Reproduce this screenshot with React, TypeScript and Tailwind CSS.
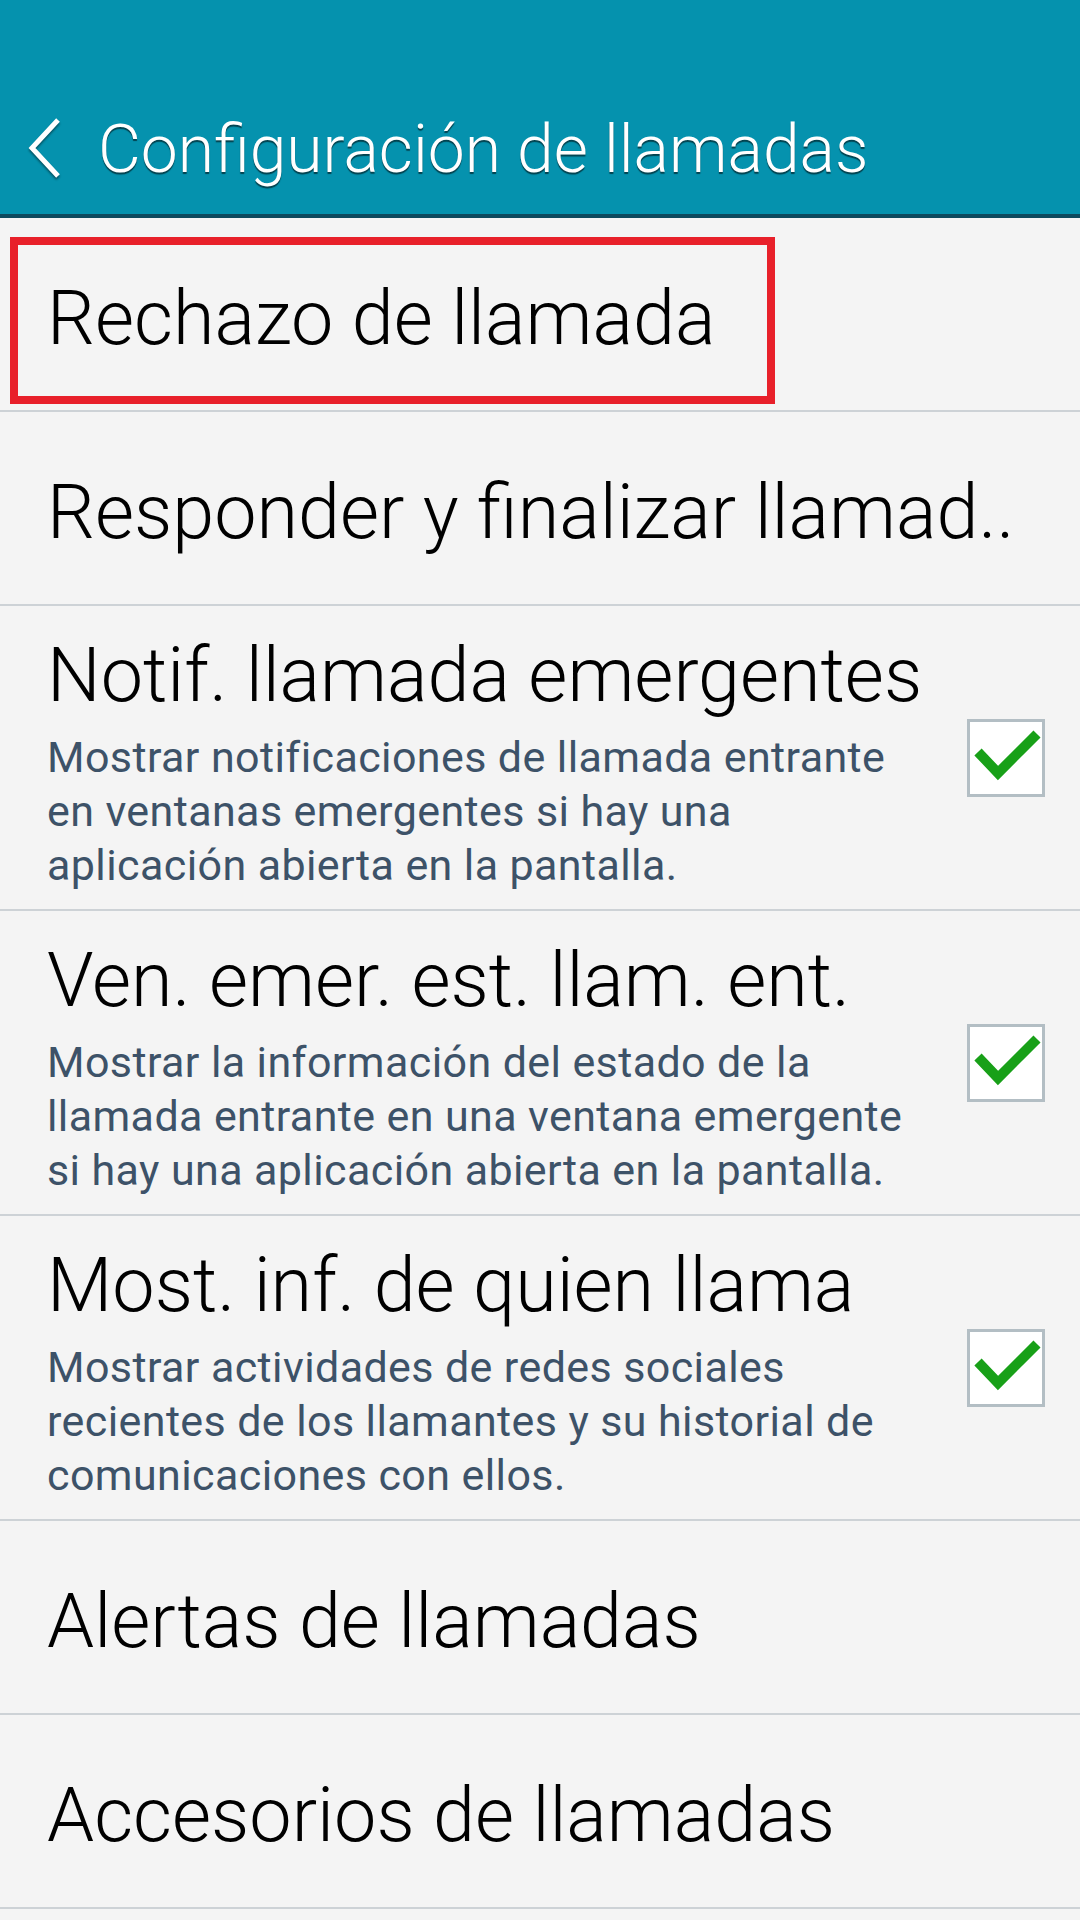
import React from "react";

function Check() {
  return (
    <div className="w-[78px] h-[78px] shrink-0 border-[3px] border-[#b3bec4] bg-white flex items-center justify-center">
      <svg width="72" height="72" viewBox="0 0 72 72">
        <polyline points="8,30 28,51 67,12" fill="none" stroke="#18a018" strokeWidth="10" strokeLinejoin="miter" />
      </svg>
    </div>
  );
}

function SimpleRow({ text, children }: { text: string; children?: React.ReactNode }) {
  return (
    <div className="relative h-[194px] border-b-2 border-[#cdd2d6] flex items-center pl-[47px] pr-[40px] pt-[8px]">
      <span className="text-[75.5px] leading-[88px] text-black font-light whitespace-nowrap">{text}</span>
      {children}
    </div>
  );
}

function CheckRow({ title, lines }: { title: string; lines: string[] }) {
  return (
    <div className="h-[305px] border-b-2 border-[#cdd2d6] flex items-center pl-[47px] pr-[35px]">
      <div className="flex-1 flex flex-col pt-[8px]">
        <span className="text-[75.5px] leading-[88px] text-black font-light whitespace-nowrap">{title}</span>
        <div className="mt-[11px] text-[43px] leading-[54px] tracking-[0.4px] text-[#3d5268] font-normal">
          {lines.map((l) => (
            <div key={l} className="whitespace-nowrap">{l}</div>
          ))}
        </div>
      </div>
      <Check />
    </div>
  );
}

export default function App() {
  return (
    <div className="w-[1080px] h-[1920px] bg-[#f4f4f4] overflow-hidden [font-family:Roboto,'Liberation_Sans',sans-serif]">
      <div className="h-[218px] bg-[#0592ae] border-b-[4px] border-[#0d4a5e] flex items-start pt-[110px] pl-[28px]">
        <svg width="34" height="60" viewBox="0 0 34 60" className="mt-[8px] [filter:drop-shadow(0_2px_1px_rgba(0,0,0,0.45))]">
          <polyline points="30,2 4,30 30,58" fill="none" stroke="white" strokeWidth="5" />
        </svg>
        <span className="ml-[36px] text-[66px] leading-[80px] text-white font-light whitespace-nowrap [text-shadow:0_2px_1px_rgba(0,0,0,0.55)]">
          Configuración de llamadas
        </span>
      </div>
      <SimpleRow text="Rechazo de llamada">
        <div className="absolute left-[10px] top-[19px] w-[765px] h-[167px] border-[8px] border-[#e8202a]" />
      </SimpleRow>
      <SimpleRow text="Responder y finalizar llamad.." />
      <CheckRow
        title="Notif. llamada emergentes"
        lines={[
          "Mostrar notificaciones de llamada entrante",
          "en ventanas emergentes si hay una",
          "aplicación abierta en la pantalla.",
        ]}
      />
      <CheckRow
        title="Ven. emer. est. llam. ent."
        lines={[
          "Mostrar la información del estado de la",
          "llamada entrante en una ventana emergente",
          "si hay una aplicación abierta en la pantalla.",
        ]}
      />
      <CheckRow
        title="Most. inf. de quien llama"
        lines={[
          "Mostrar actividades de redes sociales",
          "recientes de los llamantes y su historial de",
          "comunicaciones con ellos.",
        ]}
      />
      <SimpleRow text="Alertas de llamadas" />
      <SimpleRow text="Accesorios de llamadas" />
    </div>
  );
}
